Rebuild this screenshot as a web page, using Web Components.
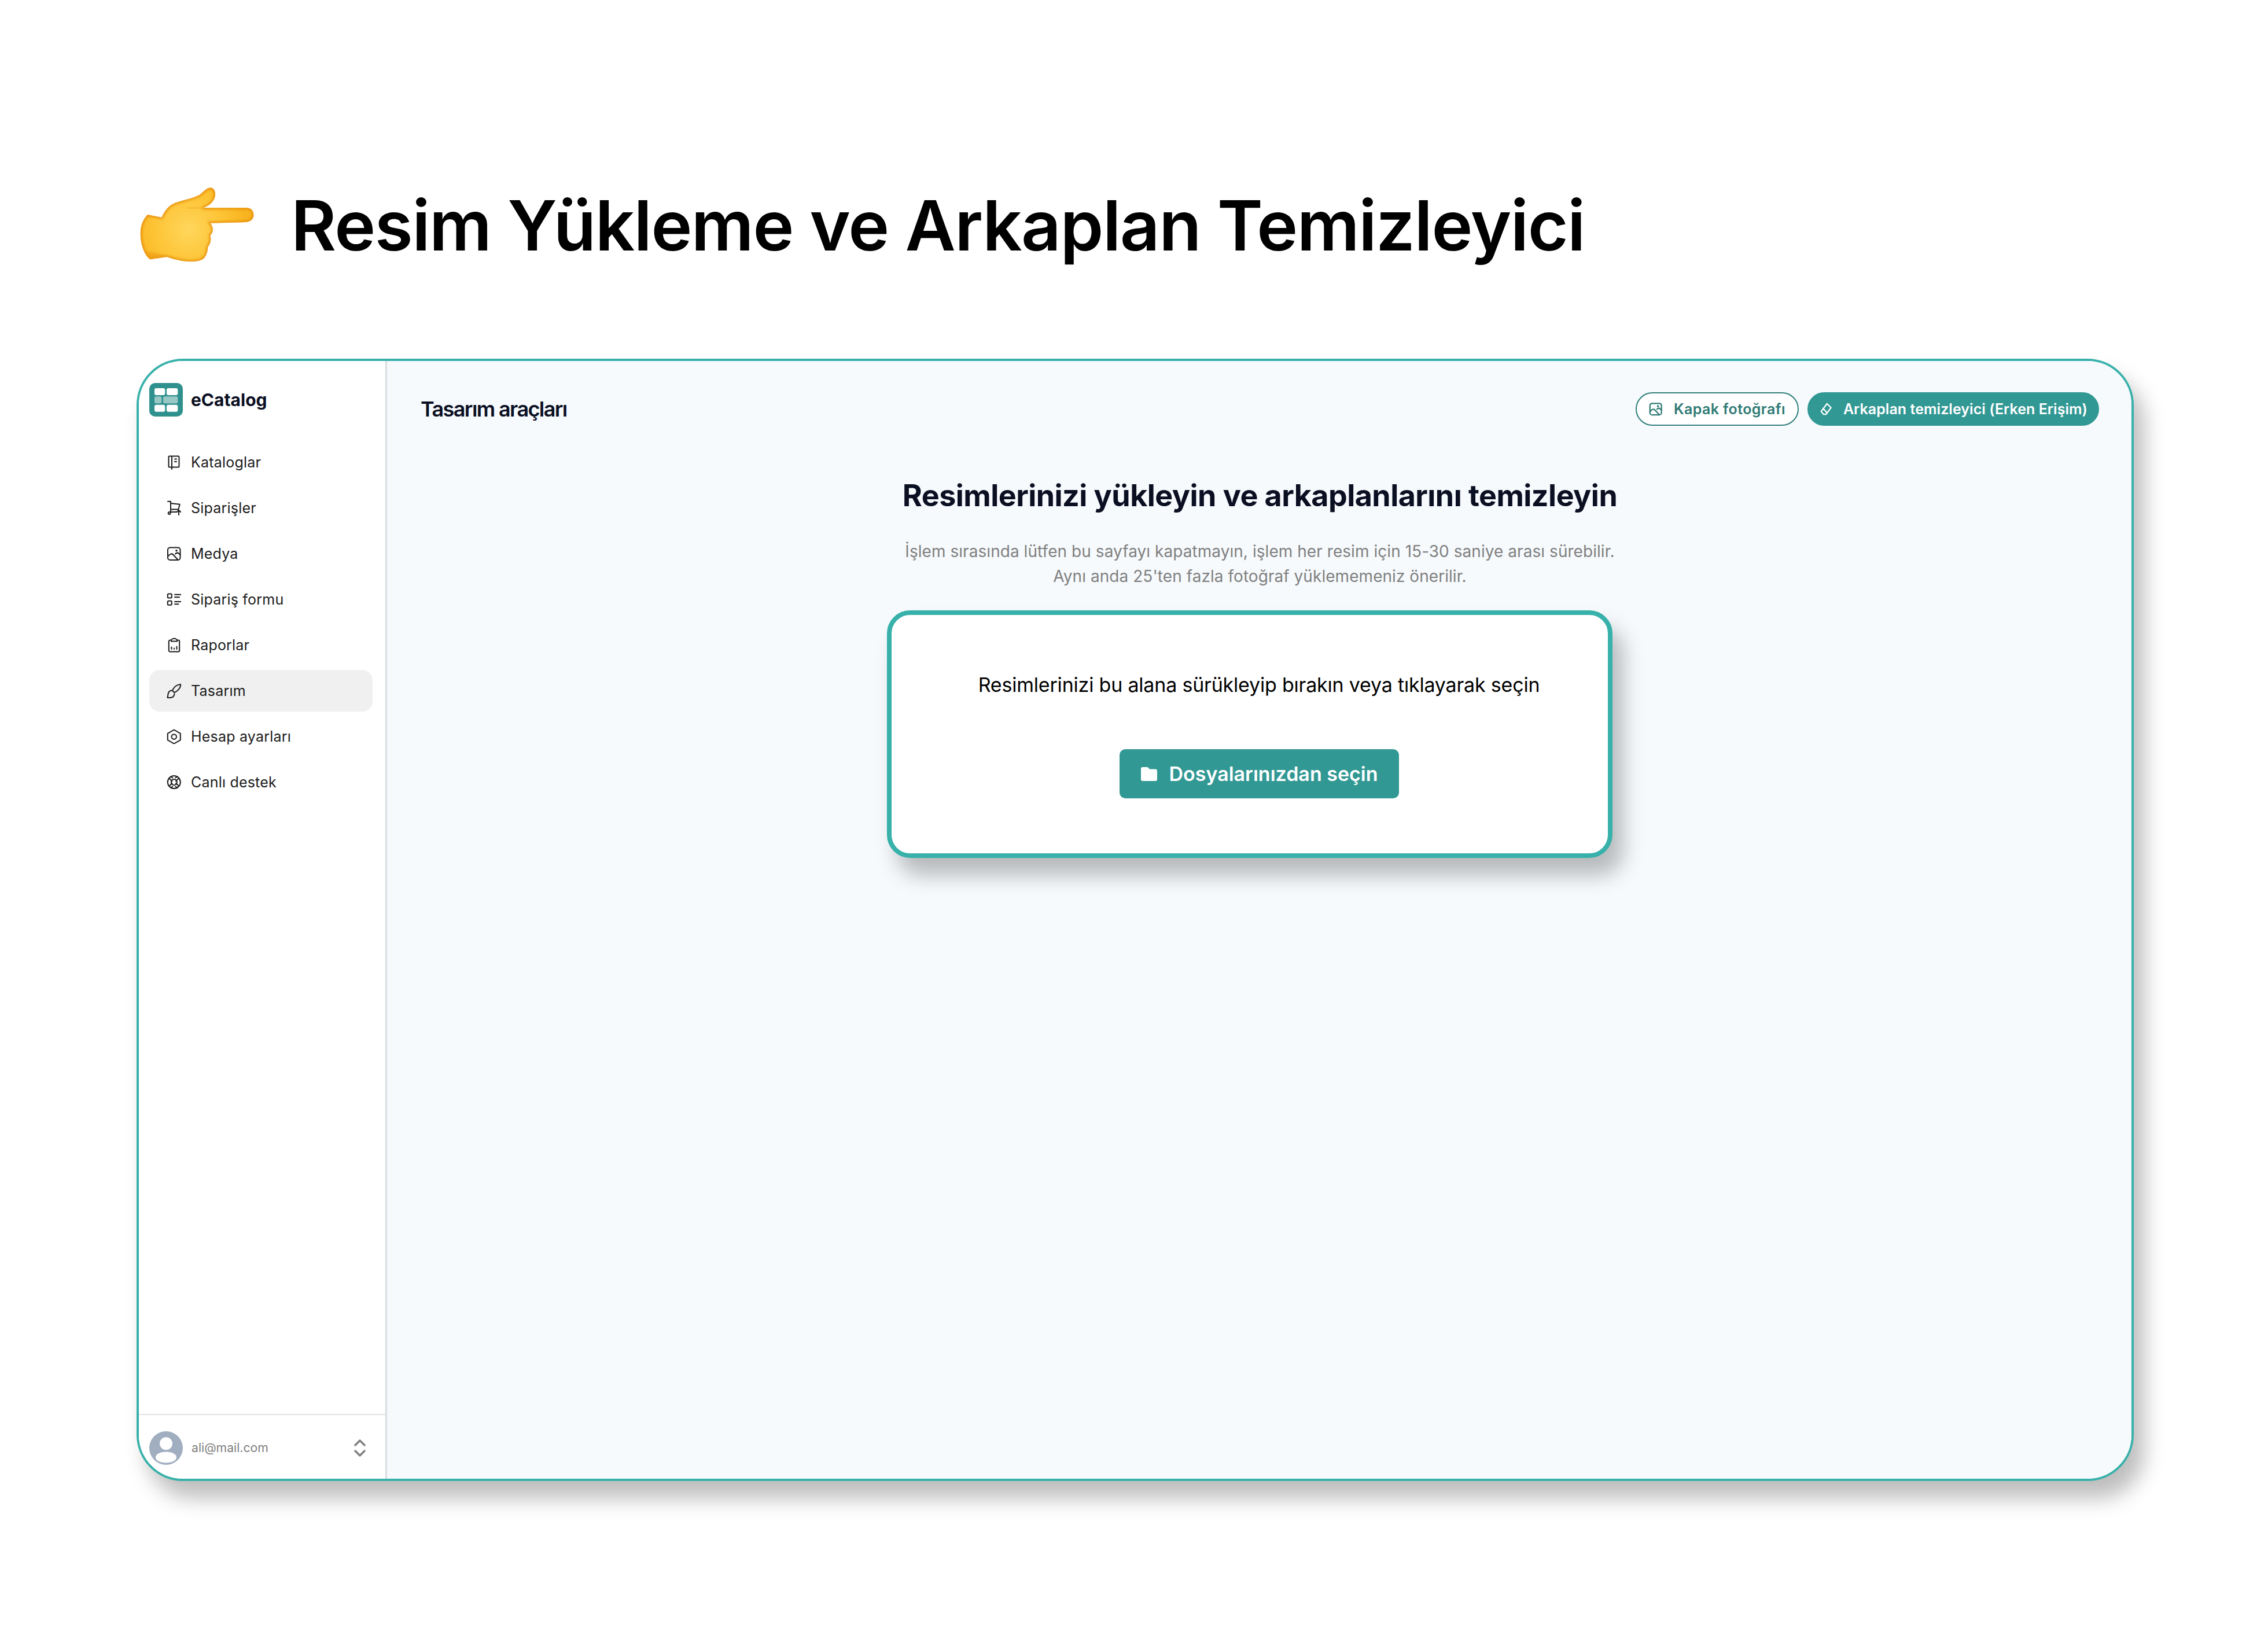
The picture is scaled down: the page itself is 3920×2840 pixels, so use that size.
<!DOCTYPE html>
<html lang="tr">
<head>
<meta charset="utf-8">
<title>Resim Yükleme ve Arkaplan Temizleyici</title>
<style>
  html, body { margin: 0; background: #fff; }
  body { font-family: Inter, "Liberation Sans", sans-serif; }
</style>
</head>
<body>
<ec-page>
  <ec-sidebar slot="sidebar">
    <ec-nav-item icon="book">Kataloglar</ec-nav-item>
    <ec-nav-item icon="cart">Siparişler</ec-nav-item>
    <ec-nav-item icon="image">Medya</ec-nav-item>
    <ec-nav-item icon="form">Sipariş formu</ec-nav-item>
    <ec-nav-item icon="report">Raporlar</ec-nav-item>
    <ec-nav-item icon="brush" active>Tasarım</ec-nav-item>
    <ec-nav-item icon="hex">Hesap ayarları</ec-nav-item>
    <ec-nav-item icon="buoy">Canlı destek</ec-nav-item>
  </ec-sidebar>
  <ec-main slot="main">
    <ec-pill slot="actions" icon="image">Kapak fotoğrafı</ec-pill>
    <ec-pill slot="actions" icon="eraser" filled>Arkaplan temizleyici (Erken Erişim)</ec-pill>
    <ec-dropzone slot="content"></ec-dropzone>
  </ec-main>
</ec-page>

<script>
const ICONS = {
  book: `<path d="M6 2.5h15a1.5 1.5 0 0 1 1.5 1.5v16a1.5 1.5 0 0 1-1.5 1.5H6A1.5 1.5 0 0 1 4.5 20V4A1.5 1.5 0 0 1 6 2.5zM10 2.5V25M15 7.5h3M15 12h3"/>`,
  cart: `<path d="M3 1.700h5V20M8 5l15.700 1.700-2.400 8.800H8M8 20h10"/><circle cx="5.700" cy="22" r="2"/><path d="M22 25v-8M18.800 20l3.200-3.200 3.200 3.200"/>`,
  image: `<rect x="3" y="2.500" width="21.500" height="21.500" rx="4"/><path d="M3 18c3-4 6.500-6 9-3.500l8 8.500M16 13.500c2-2 4-2.500 6-1l2.500 2.500"/><circle cx="18" cy="7.800" r=".8"/>`,
  form: `<rect x="2.800" y="3.500" width="7" height="7" rx="1.500"/><rect x="2.800" y="15.800" width="7" height="7" rx="1.500"/><path d="M15 4.700h10.500M15 9.300h8M15 17h10.500M15 21.300h6.500"/>`,
  report: `<path d="M9 4.500H7a2.200 2.200 0 0 0-2.200 2.200v15.600A2.200 2.200 0 0 0 7 24.500h14a2.200 2.200 0 0 0 2.200-2.200V6.700A2.200 2.200 0 0 0 21 4.500h-2"/><path d="M9 6.500V5c0-1.700 2-3.200 5-3.200S19 3.300 19 5v1.500zM9.500 20v-3.500M14 20v-1.500M18.500 20v-4.500"/>`,
  brush: `<path d="M25.500 2c-5 .3-10 3-12.500 7l-2.200 3.500 3.700 3.700L18 14c4-2.800 7-7.500 7.500-12zM10.800 12.500c-3.500 0-6.300 2-7 5L2.500 25h5c3.500 0 6.300-2.500 7-6.500"/>`,
  hex: `<path d="M13.800 1.500l11 6.300v11.400l-11 6.300-11-6.300V7.800z"/><circle cx="13.800" cy="13.500" r="4.200"/>`,
  buoy: `<circle cx="13.800" cy="13" r="11"/><circle cx="13.800" cy="13" r="5"/><path d="M5.500 6.500l5 4.500M11.300 5.500L8 3.500M22 6.500l-5 4.500M16.300 5.500l3.300-2M5.500 19.500l5-4.500M11.300 20.500L8 22.500M22 19.500l-5-4.500M16.300 20.500l3.300 2"/>`,
  eraser: `<path d="M15 3l7.500 7.500-9.500 12.500H8.500L4 17.500zM7.500 12l7.500 8"/>`
};

// one line icon, drawn in a 26 unit box
class EcIcon extends HTMLElement {
  constructor() {
    super();
    this.attachShadow({ mode: "open" });
  }
  connectedCallback() {
    const size = this.getAttribute("size") || 26;
    this.shadowRoot.innerHTML = `
      <style>
        :host { display: block; width: ${size}px; height: ${size}px; flex: none; }
        svg { display: block; width: 100%; height: 100%; fill: none; stroke: currentColor;
              stroke-width: ${this.getAttribute("stroke") || 2}; stroke-linecap: round; stroke-linejoin: round; }
      </style>
      <svg viewBox="0 0 26 26">${ICONS[this.getAttribute("name")] || ""}</svg>`;
  }
}
customElements.define("ec-icon", EcIcon);

const pageTemplate = document.createElement("template");
pageTemplate.innerHTML = `
  <style>
    :host { display: block; padding: 290px 232px 280px 220px; }
    .headline { display: flex; align-items: center; height: 200px; margin-bottom: 130px; }
    .hand { display: block; width: 240px; height: 200px; flex: none; }
    h1 { margin: 0 0 0 43px; font: 600 120px/1 Inter, "Liberation Sans", sans-serif; letter-spacing: -1.5px; color: #000; white-space: nowrap; }
    .frame {
      display: flex;
      height: 1932px;
      margin-left: 16px;
      border: 4px solid #37b1aa;
      border-radius: 80px;
      background: #fff;
      box-shadow: 18px 30px 36px rgba(0, 0, 0, 0.26);
      overflow: hidden;
    }
  </style>
  <div class="headline">
    <svg class="hand" viewBox="0 0 720 600">
      <defs>
        <radialGradient id="skin" gradientUnits="userSpaceOnUse" cx="320" cy="320" r="300">
          <stop offset="0" stop-color="#ffd65c"/>
          <stop offset="0.6" stop-color="#fdc435"/>
          <stop offset="1" stop-color="#f8b420"/>
        </radialGradient>
        <clipPath id="handclip"><path id="handshape" d="M105 243L178 257C190 232 205 205 235 188C270 170 340 160 375 140C395 125 410 105 430 103C450 103 460 125 455 150C448 180 420 200 390 208L620 208C645 208 657 228 655 250C652 272 635 282 600 283L430 287C447 305 450 335 430 350C437 370 432 395 418 410C418 440 405 468 385 478C340 495 270 485 205 462L118 475C90 455 68 400 68 340C68 295 85 265 105 243Z"/></clipPath>
        <filter id="soft" x="-10%" y="-10%" width="120%" height="120%"><feGaussianBlur stdDeviation="7"/></filter>
      </defs>
      <use href="#handshape" fill="url(#skin)"/>
      <g clip-path="url(#handclip)">
        <use href="#handshape" fill="none" stroke="#e58a08" stroke-width="13" filter="url(#soft)"/>
        <path d="M310 212L395 207" stroke="#eb9c12" stroke-width="6" fill="none" filter="url(#soft)"/>
        <path d="M68 440C130 430 170 445 240 480L70 500Z" fill="#ee9c12" filter="url(#soft)" opacity=".7"/>
      </g>
    </svg>
    <h1>Resim Yükleme ve Arkaplan Temizleyici</h1>
  </div>
  <div class="frame">
    <slot name="sidebar"></slot>
    <slot name="main"></slot>
  </div>
`;
class EcPage extends HTMLElement {
  constructor() {
    super();
    this.attachShadow({ mode: "open" }).appendChild(pageTemplate.content.cloneNode(true));
  }
}
customElements.define("ec-page", EcPage);

const sidebarTemplate = document.createElement("template");
sidebarTemplate.innerHTML = `
  <style>
    :host { display: flex; flex-direction: column; width: 426px; flex: none; background: #fff; border-right: 2px solid #d6d8da; }
    .brand { display: flex; align-items: center; gap: 14px; padding: 38px 0 0 18px; }
    .logo { display: block; width: 58px; height: 58px; flex: none; }
    .name { font: 700 30px/58px Inter, sans-serif; letter-spacing: 0; color: #0b0f22; }
    nav { flex: 1; display: flex; flex-direction: column; gap: 7px; padding: 43px 22px 0 18px; }
    .user { display: flex; align-items: center; height: 112px; box-sizing: border-box; padding: 4px 34px 0 18px; border-top: 2px solid #e3e3e3; }
    .avatar { display: block; width: 58px; height: 58px; flex: none; }
    .mail { flex: 1; margin-left: 15px; font: 400 21.200px/1 Inter, sans-serif; color: #808080; }
    .updown { display: block; width: 20px; height: 30px; fill: none; stroke: #808080; stroke-width: 3.500; stroke-linecap: round; stroke-linejoin: round; }
  </style>
  <div class="brand">
    <svg class="logo" viewBox="0 0 58 58">
      <rect width="58" height="58" rx="10" fill="#2f918d"/>
      <g fill="#fff">
        <rect x="9" y="9" width="18.300" height="12" rx="3"/>
        <rect x="30" y="9" width="19.300" height="12" rx="3"/>
        <rect x="9" y="37.700" width="18.300" height="12" rx="3"/>
        <rect x="30" y="37.700" width="19.300" height="12" rx="3"/>
        <rect x="9" y="23.300" width="12.300" height="12" rx="3" opacity=".5"/>
        <rect x="24" y="23.300" width="25.300" height="12" rx="3" opacity=".5"/>
      </g>
    </svg>
    <span class="name">eCatalog</span>
  </div>
  <nav><slot></slot></nav>
  <div class="user">
    <svg class="avatar" viewBox="0 0 58 58">
      <circle cx="29" cy="29" r="29" fill="#a0aec0"/>
      <circle cx="29" cy="21.300" r="11" fill="#fff"/>
      <ellipse cx="29" cy="45" rx="18" ry="9.500" fill="#fff"/>
    </svg>
    <span class="mail">ali@mail.com</span>
    <svg class="updown" viewBox="0 0 20 30"><path d="M2 10l8-8 8 8M2 20l8 8 8-8"/></svg>
  </div>
`;
class EcSidebar extends HTMLElement {
  constructor() {
    super();
    this.attachShadow({ mode: "open" }).appendChild(sidebarTemplate.content.cloneNode(true));
  }
}
customElements.define("ec-sidebar", EcSidebar);

const navTemplate = document.createElement("template");
navTemplate.innerHTML = `
  <style>
    :host { display: flex; align-items: center; gap: 17px; height: 72px; padding-left: 29px; border-radius: 18px;
            font: 400 25px/1 Inter, sans-serif; letter-spacing: 0.2px; color: #1c1c1c; }
    :host([active]) { background: #f0f0f0; }
  </style>
  <span class="slot-icon"></span>
  <span><slot></slot></span>
`;
class EcNavItem extends HTMLElement {
  constructor() {
    super();
    const root = navTemplate.content.cloneNode(true);
    const icon = document.createElement("ec-icon");
    icon.setAttribute("name", this.getAttribute("icon"));
    root.querySelector(".slot-icon").replaceWith(icon);
    this.attachShadow({ mode: "open" }).appendChild(root);
  }
}
customElements.define("ec-nav-item", EcNavItem);

const pillTemplate = document.createElement("template");
pillTemplate.innerHTML = `
  <style>
    :host { display: inline-flex; align-items: center; gap: 20px; height: 58px; box-sizing: border-box; padding: 0 21px 0 20px;
            border: 2px solid #2f7f7b; border-radius: 29px; background: #fff;
            font: 600 25px/1 Inter, sans-serif; letter-spacing: 0.4px; color: #2f7a75; white-space: nowrap; }
    :host([filled]) { background: #329894; border-color: #329894; color: #fff; padding: 0 18px; gap: 18px; letter-spacing: 0.05px; }
  </style>
  <span class="slot-icon"></span>
  <span><slot></slot></span>
`;
class EcPill extends HTMLElement {
  constructor() {
    super();
    const root = pillTemplate.content.cloneNode(true);
    const icon = document.createElement("ec-icon");
    icon.setAttribute("name", this.getAttribute("icon"));
    icon.setAttribute("size", "24");
    icon.setAttribute("stroke", "2.400");
    root.querySelector(".slot-icon").replaceWith(icon);
    this.attachShadow({ mode: "open" }).appendChild(root);
  }
}
customElements.define("ec-pill", EcPill);

const mainTemplate = document.createElement("template");
mainTemplate.innerHTML = `
  <style>
    :host { display: block; flex: 1; min-width: 0; background: #f6fafd; border-left: 2px solid #eaf0f6; box-sizing: border-box; padding: 54px 56px 0 57px; }
    header { display: flex; align-items: center; justify-content: space-between; height: 58px; }
    h2 { margin: 0; font: 600 36px/58px Inter, sans-serif; letter-spacing: -1.6px; color: #0b0f22; }
    .actions { display: flex; gap: 15px; }
    .intro { display: flex; flex-direction: column; align-items: center; margin-top: 89px; }
    h3 { margin: 0; font: 700 52px/64px Inter, sans-serif; letter-spacing: -0.55px; color: #0b0f22; white-space: nowrap; }
    p { margin: 43px 0 0; text-align: center; font: 400 28px/42.500px Inter, sans-serif; letter-spacing: 0.05px; color: #808080; white-space: nowrap; }
    .content { display: flex; justify-content: center; margin-top: 38px; }
  </style>
  <header>
    <h2>Tasarım araçları</h2>
    <div class="actions"><slot name="actions"></slot></div>
  </header>
  <div class="intro">
    <h3>Resimlerinizi yükleyin ve arkaplanlarını temizleyin</h3>
    <p>İşlem sırasında lütfen bu sayfayı kapatmayın, işlem her resim için 15-30 saniye arası sürebilir.<br>Aynı anda 25'ten fazla fotoğraf yüklememeniz önerilir.</p>
  </div>
  <div class="content"><slot name="content"></slot></div>
`;
class EcMain extends HTMLElement {
  constructor() {
    super();
    this.attachShadow({ mode: "open" }).appendChild(mainTemplate.content.cloneNode(true));
  }
}
customElements.define("ec-main", EcMain);

const dropTemplate = document.createElement("template");
dropTemplate.innerHTML = `
  <style>
    :host { display: flex; flex-direction: column; align-items: center; width: 1254px; height: 428px; box-sizing: border-box;
            margin-right: 35px; padding: 100px 0 0 32px; background: #fff; border: 8px solid #37b1aa; border-radius: 40px;
            box-shadow: 18px 30px 36px rgba(0, 0, 0, 0.26); }
    .hint { font: 400 34px/42px Inter, sans-serif; letter-spacing: -0.2px; color: #000; white-space: nowrap; }
    .pick { display: flex; align-items: center; gap: 21px; width: 483px; height: 85px; margin-top: 90px; box-sizing: border-box; padding-left: 37px;
            background: #329894; border-radius: 10px; font: 600 34px/1 Inter, sans-serif; color: #fff; white-space: nowrap; }
    svg { display: block; width: 28px; height: 24px; flex: none; fill: #fff; }
  </style>
  <div class="hint">Resimlerinizi bu alana sürükleyip bırakın veya tıklayarak seçin</div>
  <div class="pick">
    <svg viewBox="0 0 28 24"><path d="M3 0h7.500c1 0 1.700.4 2.300 1.100L15 3.500h10a3 3 0 0 1 3 3V21a3 3 0 0 1-3 3H3a3 3 0 0 1-3-3V3a3 3 0 0 1 3-3z"/></svg>
    <span>Dosyalarınızdan seçin</span>
  </div>
`;
class EcDropzone extends HTMLElement {
  constructor() {
    super();
    this.attachShadow({ mode: "open" }).appendChild(dropTemplate.content.cloneNode(true));
  }
}
customElements.define("ec-dropzone", EcDropzone);
</script>
</body>
</html>
